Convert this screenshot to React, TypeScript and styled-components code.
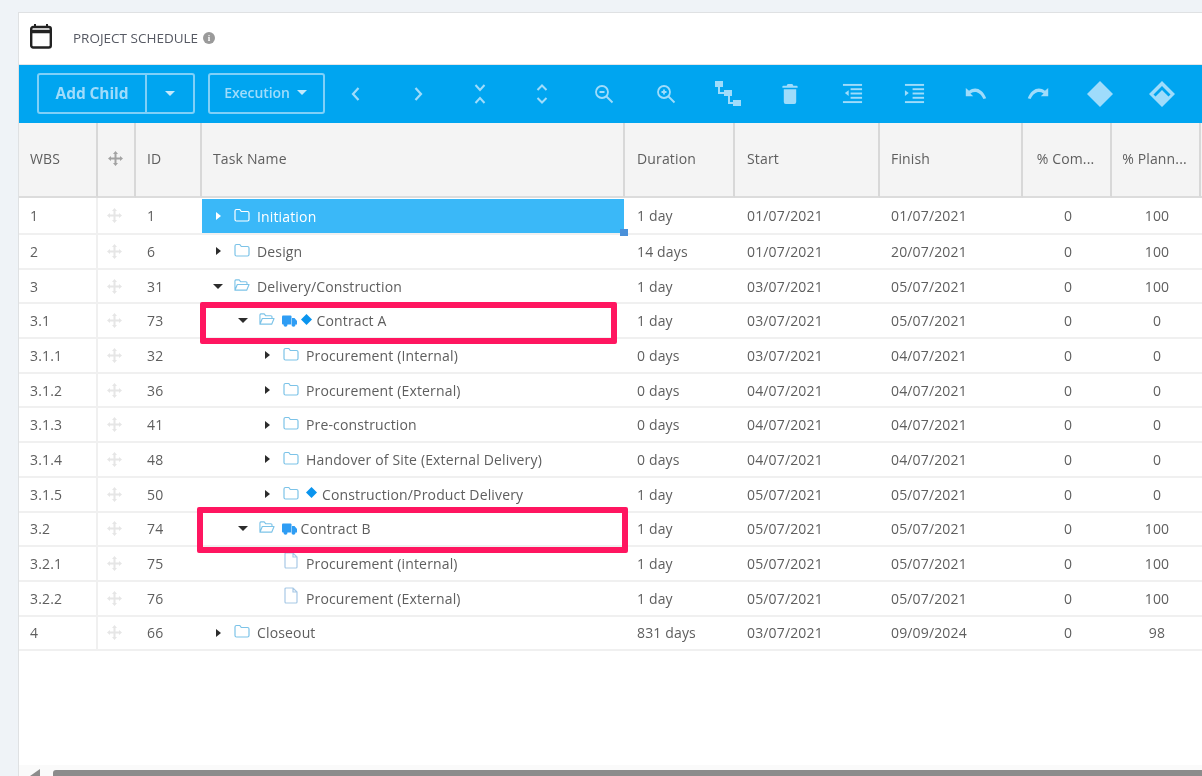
import React from "react";
import styled, { createGlobalStyle } from "styled-components";

const Global = createGlobalStyle`
  html, body { margin: 0; padding: 0; background: #eff3f7; }
  body { font-family: "Open Sans", "Liberation Sans", sans-serif; color: #555; }
`;

const COLS = "79px 38px 66px 423px 110px 145px 143px 89px 89px 3px";
const TEXT = "#5e5e5e";

const Page = styled.div`
  width: 1202px; height: 776px; overflow: hidden; box-sizing: border-box;
  padding: 12px 0 0 18px; background: #eff3f7; filter: blur(0.35px);
`;
const Card = styled.div`
  position: relative; width: 1184px; height: 764px; box-sizing: border-box;
  background: #fff; border-top: 1px solid #dfe1e3; border-left: 1px solid #dfe1e3;
  display: flex; flex-direction: column;
`;
const TitleBar = styled.div`
  flex: none; display: flex; align-items: center; padding-left: 10px;
  border-bottom: 1px solid #e4e6e8; height: 51px;
`;
const Title = styled.span`
  font-size: 13.500px; color: #565963; margin: -2px 0 0 20px;
`;
const InfoDot = styled.span`
  width: 12px; height: 12px; border-radius: 50%; background: #9a9a9a; color: #fff; margin: -1px 0 0 5px;
  font: 700 9px/12px "Liberation Serif", serif; text-align: center;
`;
const Toolbar = styled.div`
  height: 58px; flex: none; background: #00a5f0; display: flex; align-items: center; padding: 0 0 1px 18px; box-sizing: border-box;
  color: #9fdcfb;
`;
const BtnGroup = styled.div`
  display: flex; height: 41px; width: 158px; box-sizing: border-box; border: 2px solid #7fd0f8; border-radius: 3px; margin-right: 13px;
`;
const AddBtn = styled.div`
  width: 108px; display: flex; align-items: center; justify-content: center; font-size: 15.500px; font-weight: 700; color: #9fdcfb;
  border-right: 2px solid #7fd0f8; letter-spacing: -0.1px; padding-bottom: 2px; box-sizing: border-box;
`;
const Caret = styled.span`
  display: inline-block; width: 0; height: 0; border-left: 5px solid transparent; border-right: 5px solid transparent; border-top: 5px solid #c3e9fc;
`;
const CaretBtn = styled.div`
  flex: 1; display: flex; align-items: center; justify-content: center;
`;
const PhaseBtn = styled.div`
  width: 117px; height: 41px; box-sizing: border-box; border: 2px solid #7fd0f8; border-radius: 3px; display: flex; align-items: center; justify-content: center; gap: 7px;
  font-size: 14px; font-weight: 600; color: #9fdcfb; letter-spacing: -0.1px; padding: 0 2px 3px 0;
`;
const ToolIcon = styled.div`
  width: 62px; flex: none; display: flex; align-items: center; justify-content: center; height: 30px;
`;
const Table = styled.div`
  display: grid; grid-template-columns: ${COLS};
`;
const Head = styled.div<{ $center?: boolean; $pad?: number }>`
  height: 75px; box-sizing: border-box; background: #f4f4f4; border-right: 2px solid #d8d8d8; border-bottom: 2px solid #dcdcdc;
  display: flex; align-items: center; font-size: 14px; letter-spacing: 0.15px; color: ${TEXT}; white-space: nowrap;
  padding: 0 ${p => (p.$center ? 2 : 0)}px 3px ${p => (p.$center ? 0 : p.$pad ?? 11)}px;
  justify-content: ${p => (p.$center ? "center" : "flex-start")};
`;
const Rows = styled.div`
  display: flex; flex-direction: column;
`;
const Row = styled.div`
  display: grid; grid-template-columns: ${COLS};
  height: 34.7px; box-sizing: border-box; border-bottom: 2px solid #f0f0f0;
  &:first-child { height: 37px; }
`;
const Cell = styled.div<{ $divider?: boolean; $pad?: number }>`
  display: flex; align-items: center; font-size: 14px; letter-spacing: 0.15px; color: ${TEXT}; white-space: nowrap;
  padding-left: ${p => p.$pad ?? 11}px;
  border-right: ${p => (p.$divider ? "2px solid #f0f0f0" : "none")};
`;
const GripCell = styled.div`
  display: flex; align-items: center; justify-content: center; padding-right: 5px;
`;
const NumCell = styled.div`
  display: flex; align-items: center; justify-content: center; font-size: 14px; letter-spacing: 0.15px; color: ${TEXT}; padding-left: 1px;
`;
const TaskCell = styled.div<{ $level: number; $selected?: boolean }>`
  display: flex; align-items: center; position: relative; white-space: nowrap; font-size: 14px; letter-spacing: 0.15px;
  padding-left: ${p => 12 + p.$level * 24.5}px;
  margin-right: 1px;
  color: ${p => (p.$selected ? "#fff" : TEXT)};
  background: ${p => (p.$selected ? "#3ab8f8" : "transparent")};
  margin-top: ${p => (p.$selected ? 1 : 0)}px;
  font-weight: ${p => (p.$selected ? 500 : 400)};
`;
const Arrow = styled.span<{ $open?: boolean; $light?: boolean }>`
  width: 8px; margin-right: 12px; flex: none; display: flex; justify-content: center;
  &::before {
    content: ""; width: 0; height: 0;
    ${p => p.$open
      ? `border-left: 5px solid transparent; border-right: 5px solid transparent; border-top: 5px solid #2c2c2c;`
      : `border-top: 4.5px solid transparent; border-bottom: 4.5px solid transparent; border-left: 5px solid ${p.$light ? "#fff" : "#2c2c2c"};`}
  }
`;
const ArrowGap = styled.span`
  width: 8px; margin-right: 12px; flex: none;
`;
const NodeIcon = styled.span`
  flex: none; width: 16px; height: 16px; margin-right: 7px; display: flex; margin-top: -3px;
`;
const TruckIcon = styled.span`
  flex: none; width: 15px; height: 12px; margin-right: 4px; display: flex;
`;
const DiamondMark = styled.span`
  flex: none; width: 11px; height: 11px; margin-right: 5px; display: flex; margin-top: -3px;
`;
const Handle = styled.span`
  position: absolute; right: -4px; bottom: -3px; width: 8px; height: 7px; background: #4a90d9;
`;
const Highlight = styled.div<{ $x: number; $y: number; $w: number; $h: number }>`
  position: absolute; left: ${p => p.$x}px; top: ${p => p.$y}px; width: ${p => p.$w}px; height: ${p => p.$h}px;
  box-sizing: border-box; border: 6px solid #ff1660; border-radius: 2px;
`;
const ScrollTrack = styled.div`
  margin-top: auto; height: 11px; flex: none; display: flex; align-items: flex-end; background: #fafafa; padding-left: 11px;
`;
const ScrollArrow = styled.span`
  width: 0; height: 0; border-style: solid; border-width: 0 0 7px 10px; border-color: transparent transparent #8c8c8c transparent;
  margin-right: 13px;
`;
const ScrollThumb = styled.span`
  flex: 1; height: 6px; background: #8c8c8c; border-radius: 3px 0 0 0;
`;

const Svg: React.FC<{ w?: number; h?: number; vb?: string; sw?: number; children: React.ReactNode }> = ({ w = 20, h = 20, vb = "0 0 20 20", sw = 2, children }) => (
  <svg width={w} height={h} viewBox={vb} fill="none" stroke="currentColor" strokeWidth={sw}>{children}</svg>
);

const icons: React.ReactNode[] = [
  <Svg sw={2.2}><path d="M12.5 4 7 10l5.5 6" /></Svg>,
  <Svg sw={2.2}><path d="M7.5 4 13 10l-5.500 6" /></Svg>,
  <Svg h={24} vb="0 0 20 24"><path d="M5.500 3 10 8l4.500-5M5.500 21 10 16l4.500 5" /></Svg>,
  <Svg h={24} vb="0 0 20 24"><path d="M5.500 8 10 3.500 14.500 8M5.500 16 10 20.500 14.500 16" /></Svg>,
  <Svg w={22} h={22} vb="0 0 22 22" sw={1.800}><circle cx="9" cy="9" r="6" /><path d="M6.500 9h5M13.500 13.500l6 6" /></Svg>,
  <Svg w={22} h={22} vb="0 0 22 22" sw={1.800}><circle cx="9" cy="9" r="6" /><path d="M6.500 9h5M9 6.500v5M13.500 13.500l6 6" /></Svg>,
  <svg width="28" height="28" viewBox="0 0 28 28"><path d="M5 6v7h6M15 14v9h5" fill="none" stroke="currentColor" strokeWidth="2" /><rect x="1" y="1" width="8" height="6" fill="currentColor" /><rect x="10" y="10" width="8" height="6" fill="currentColor" /><rect x="19" y="20" width="8" height="6" fill="currentColor" /></svg>,
  <svg width="16" height="21" viewBox="0 0 16 22" fill="currentColor"><path d="M5.500 1h5l1 2H15a1 1 0 0 1 1 1v1H0V4a1 1 0 0 1 1-1h3.500z" /><path d="M1.500 6.500h13V20a2 2 0 0 1-2 2h-9a2 2 0 0 1-2-2z" /></svg>,
  <svg width="21" height="21" viewBox="0 0 22 22" fill="currentColor"><rect x="1" y="1" width="20" height="2" /><rect x="9" y="5.500" width="12" height="2" /><rect x="9" y="10" width="12" height="2" /><rect x="9" y="14.500" width="12" height="2" /><rect x="1" y="19" width="20" height="2" /><path d="M7 7.500v6l-4-3z" /></svg>,
  <svg width="21" height="21" viewBox="0 0 22 22" fill="currentColor"><rect x="1" y="1" width="20" height="2" /><rect x="9" y="5.500" width="12" height="2" /><rect x="9" y="10" width="12" height="2" /><rect x="9" y="14.500" width="12" height="2" /><rect x="1" y="19" width="20" height="2" /><path d="M1 7.500v6l4-3z" /></svg>,
  <svg width="24" height="13" viewBox="0 0 24 14" fill="currentColor"><path d="M1 1v9h8L6 7c5-3 10-2 14 6l3-1C19 2 11-1 4.500 4z" /></svg>,
  <svg width="24" height="13" viewBox="0 0 24 14" fill="currentColor"><path d="M23 1v9h-8l3-3C13 4 8 5 4 13l-3-1C5 2 13-1 19.500 4z" /></svg>,
  <svg width="28" height="28" viewBox="0 0 28 28" fill="currentColor"><path d="M14 1 27 14 14 27 1 14z" /></svg>,
  <svg width="28" height="28" viewBox="0 0 28 28" fill="currentColor"><path d="M14 1 27 14 14 27 1 14zM14 6 5.500 14.500 7.500 16.500 14 10l6.500 6.500 2-2z" fillRule="evenodd" /></svg>,
];

const Calendar = () => (
  <svg width="24" height="26" viewBox="0 0 24 26" fill="none" style={{ marginTop: -5 }}>
    <rect x="2.200" y="4" width="19.600" height="20.500" rx="2" stroke="#222" strokeWidth="2.400" />
    <path d="M2 8.500h20" stroke="#222" strokeWidth="3.500" />
    <path d="M6 1v4M18 1v4" stroke="#222" strokeWidth="2" />
  </svg>
);
const Grip: React.FC<{ $c: string }> = ({ $c }) => (
  <svg width="15" height="15" viewBox="0 0 15 15" fill={$c}>
    <path d="M7.500 0 10 3H8.500v3.500H12V5l3 2.500L12 10V8.500H8.500V12H10l-2.500 3L5 12h1.500V8.500H3V10L0 7.500 3 5v1.500h3.500V3H5z" />
  </svg>
);
const FolderClosed: React.FC<{ $c?: string }> = ({ $c = "#7cc3e8" }) => (
  <svg width="16" height="14" viewBox="0 0 16 14" fill="none" stroke={$c} strokeWidth="1.200" style={{ marginTop: 1 }}>
    <path d="M1 3a1.500 1.500 0 0 1 1.500-1.500h3.300L7.300 3.500h6.200A1.500 1.500 0 0 1 15 5v6.500a1.500 1.500 0 0 1-1.500 1.500h-11A1.500 1.500 0 0 1 1 11.500z" />
  </svg>
);
const FolderOpenIcon = () => (
  <svg width="17" height="14" viewBox="0 0 17 14" fill="none" stroke="#7cc3e8" strokeWidth="1.200" style={{ marginTop: 1 }}>
    <path d="M1 12V2.500A1.300 1.300 0 0 1 2.300 1.500h3.200l1.500 2h5.500A1.300 1.300 0 0 1 13.800 5v1.500M1 12.500 3.500 6.500h12.500l-2.500 6z" strokeLinejoin="round" />
  </svg>
);
const FileIcon = () => (
  <svg width="14" height="17" viewBox="0 0 14 17" fill="none" stroke="#a8c9e6" strokeWidth="1.200" style={{ margin: "-2px 0 0 1px" }}>
    <path d="M1 2a1 1 0 0 1 1-1h7l4 4v10a1 1 0 0 1-1 1H2a1 1 0 0 1-1-1zM9 1v4h4" />
  </svg>
);
const Truck = () => (
  <svg width="15" height="12" viewBox="0 0 15 12" fill="#2f9df4">
    <rect x="0" y="0.500" width="9.500" height="9" rx="1" />
    <path d="M10 3h2.500L15 6v3.500h-5z" />
    <circle cx="3.500" cy="9.800" r="2" />
    <circle cx="11.500" cy="9.800" r="2" />
  </svg>
);
const Diamond = () => (
  <svg width="11" height="11" viewBox="0 0 11 11" fill="#0a94ee"><path d="M5.500 0 11 5.500 5.500 11 0 5.500z" /></svg>
);

type Node = "closed" | "open" | "file";
type Task = {
  wbs: string; id: string; name: string; level: number; node: Node; truck?: boolean; diamond?: boolean; selected?: boolean;
  dur: string; start: string; finish: string; com: string; plan: string;
};
const tasks: Task[] = [
  { wbs: "1", id: "1", name: "Initiation", level: 0, node: "closed", selected: true, dur: "1 day", start: "01/07/2021", finish: "01/07/2021", com: "0", plan: "100" },
  { wbs: "2", id: "6", name: "Design", level: 0, node: "closed", dur: "14 days", start: "01/07/2021", finish: "20/07/2021", com: "0", plan: "100" },
  { wbs: "3", id: "31", name: "Delivery/Construction", level: 0, node: "open", dur: "1 day", start: "03/07/2021", finish: "05/07/2021", com: "0", plan: "100" },
  { wbs: "3.1", id: "73", name: "Contract A", level: 1, node: "open", truck: true, diamond: true, dur: "1 day", start: "03/07/2021", finish: "05/07/2021", com: "0", plan: "0" },
  { wbs: "3.1.1", id: "32", name: "Procurement (Internal)", level: 2, node: "closed", dur: "0 days", start: "03/07/2021", finish: "04/07/2021", com: "0", plan: "0" },
  { wbs: "3.1.2", id: "36", name: "Procurement (External)", level: 2, node: "closed", dur: "0 days", start: "04/07/2021", finish: "04/07/2021", com: "0", plan: "0" },
  { wbs: "3.1.3", id: "41", name: "Pre-construction", level: 2, node: "closed", dur: "0 days", start: "04/07/2021", finish: "04/07/2021", com: "0", plan: "0" },
  { wbs: "3.1.4", id: "48", name: "Handover of Site (External Delivery)", level: 2, node: "closed", dur: "0 days", start: "04/07/2021", finish: "04/07/2021", com: "0", plan: "0" },
  { wbs: "3.1.5", id: "50", name: "Construction/Product Delivery", level: 2, node: "closed", diamond: true, dur: "1 day", start: "05/07/2021", finish: "05/07/2021", com: "0", plan: "0" },
  { wbs: "3.2", id: "74", name: "Contract B", level: 1, node: "open", truck: true, dur: "1 day", start: "05/07/2021", finish: "05/07/2021", com: "0", plan: "100" },
  { wbs: "3.2.1", id: "75", name: "Procurement (internal)", level: 2, node: "file", dur: "1 day", start: "05/07/2021", finish: "05/07/2021", com: "0", plan: "100" },
  { wbs: "3.2.2", id: "76", name: "Procurement (External)", level: 2, node: "file", dur: "1 day", start: "05/07/2021", finish: "05/07/2021", com: "0", plan: "100" },
  { wbs: "4", id: "66", name: "Closeout", level: 0, node: "closed", dur: "831 days", start: "03/07/2021", finish: "09/09/2024", com: "0", plan: "98" },
];

export default function App() {
  return (
    <Page>
      <Global />
      <Card>
        <TitleBar>
          <Calendar />
          <Title>PROJECT SCHEDULE</Title>
          <InfoDot>i</InfoDot>
        </TitleBar>
        <Toolbar>
          <BtnGroup>
            <AddBtn>Add Child</AddBtn>
            <CaretBtn><Caret /></CaretBtn>
          </BtnGroup>
          <PhaseBtn>Execution <Caret /></PhaseBtn>
          {icons.map((ic, i) => <ToolIcon key={i}>{ic}</ToolIcon>)}
        </Toolbar>
        <Table>
          <Head>WBS</Head>
          <Head $center><Grip $c="#a3a3a3" /></Head>
          <Head>ID</Head>
          <Head>Task Name</Head>
          <Head $pad={12}>Duration</Head>
          <Head $pad={12}>Start</Head>
          <Head $pad={11}>Finish</Head>
          <Head $center>% Com...</Head>
          <Head $center>% Plann...</Head>
          <Head />
        </Table>
        <Rows>
          {tasks.map(t => (
            <Row key={t.wbs}>
              <Cell $divider>{t.wbs}</Cell>
              <GripCell><Grip $c="#e6e6e6" /></GripCell>
              <Cell>{t.id}</Cell>
              <TaskCell $level={t.level} $selected={t.selected}>
                {t.node === "file" ? <ArrowGap /> : <Arrow $open={t.node === "open"} $light={t.selected} />}
                <NodeIcon>
                  {t.node === "closed" && <FolderClosed $c={t.selected ? "#fff" : undefined} />}
                  {t.node === "open" && <FolderOpenIcon />}
                  {t.node === "file" && <FileIcon />}
                </NodeIcon>
                {t.truck && <TruckIcon><Truck /></TruckIcon>}
                {t.diamond && <DiamondMark><Diamond /></DiamondMark>}
                {t.name}
                {t.selected && <Handle />}
              </TaskCell>
              <Cell $pad={12}>{t.dur}</Cell>
              <Cell $pad={12}>{t.start}</Cell>
              <Cell $pad={11}>{t.finish}</Cell>
              <NumCell>{t.com}</NumCell>
              <NumCell>{t.plan}</NumCell>
              <Cell />
            </Row>
          ))}
        </Rows>
        <ScrollTrack>
          <ScrollArrow />
          <ScrollThumb />
        </ScrollTrack>
        <Highlight $x={181} $y={289} $w={417} $h={42} />
        <Highlight $x={178} $y={494} $w={431} $h={46} />
      </Card>
    </Page>
  );
}
